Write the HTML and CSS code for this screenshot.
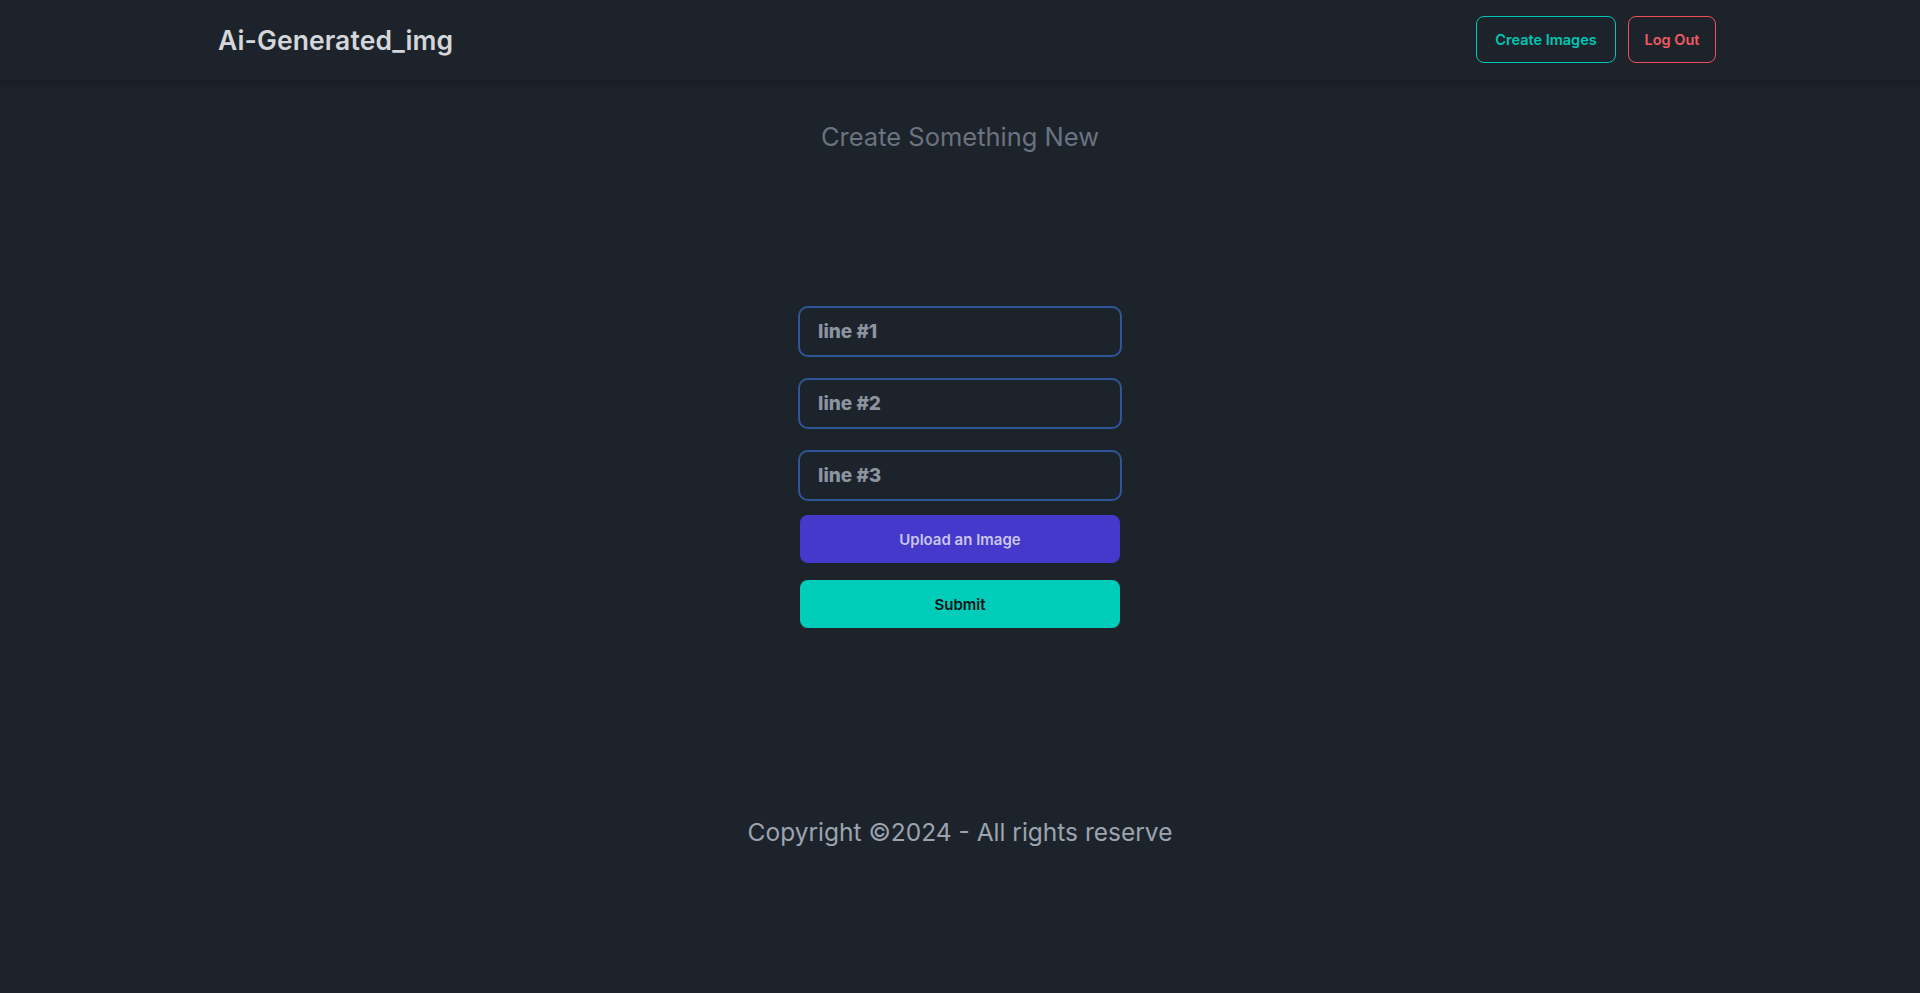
FILE: index.html
```html
<!DOCTYPE html>
<html lang="en">
<head>
<meta charset="utf-8">
<title>Ai-Generated_img</title>
<link rel="stylesheet" href="styles.css">
</head>
<body>
<header class="navbar">
  <a class="brand" href="#">Ai-Generated_img</a>
  <nav class="nav-actions">
    <button class="btn-outline btn-create">Create Images</button>
    <button class="btn-outline btn-logout">Log Out</button>
  </nav>
</header>
<main class="main">
  <h1 class="page-title">Create Something New</h1>
  <form class="form">
    <input class="field" type="text" placeholder="line #1">
    <input class="field" type="text" placeholder="line #2">
    <input class="field" type="text" placeholder="line #3">
    <button type="button" class="btn-fill btn-upload">Upload an Image</button>
    <button type="button" class="btn-fill btn-submit">Submit</button>
  </form>
</main>
<footer class="footer">
  <p>Copyright ©2024 - All rights reserve</p>
</footer>
</body>
</html>
```

FILE: styles.css
```css
* { box-sizing: border-box; }
html, body { margin: 0; padding: 0; }
body {
  background: #1d232a;
  color: #a6adbb;
  font-family: "Inter", "Noto Sans", sans-serif;
  min-height: 993px;
}
.navbar {
  height: 80px;
  display: flex;
  align-items: center;
  justify-content: space-between;
  padding: 0 204px 0 218px;
  background: #1d232a;
  box-shadow: 0 2px 8px rgba(0, 0, 0, 0.25);
  position: relative;
}
.brand {
  color: #d4d6da;
  text-decoration: none;
  font-size: 26.5px;
  font-weight: 600;
  letter-spacing: 0.1px;
}
.nav-actions {
  display: flex;
  gap: 12px;
  align-items: center;
  margin-top: -1px;
}
.btn-outline {
  height: 47px;
  border-radius: 8px;
  background: transparent;
  font-family: inherit;
  font-size: 14.5px;
  font-weight: 600;
  cursor: pointer;
  padding: 0;
}
.btn-create {
  width: 140px;
  border: 1px solid #00c7b5;
  color: #00c7b5;
}
.btn-logout {
  width: 88px;
  border: 1px solid #f04e5a;
  color: #f25a63;
}
.main {
  display: flex;
  flex-direction: column;
  align-items: center;
}
.page-title {
  margin: 0;
  padding-top: 40px;
  font-size: 25.5px;
  font-weight: 400;
  color: #6b7280;
  line-height: 34px;
}
.form {
  margin-top: 152px;
  width: 324px;
  display: flex;
  flex-direction: column;
  align-items: center;
}
.field {
  width: 324px;
  height: 51px;
  border: 2px solid #30569a;
  border-radius: 10px;
  background: #1d232a;
  padding: 0 18px;
  font-family: inherit;
  font-size: 19px;
  font-weight: 800;
  color: #a6adbb;
  margin-bottom: 21px;
  outline: none;
}
.field:last-of-type { margin-bottom: 0; }
.field::placeholder { color: #8c93a1; }
.btn-fill {
  width: 320px;
  height: 48px;
  border: none;
  border-radius: 8px;
  font-family: inherit;
  font-size: 15px;
  font-weight: 600;
  cursor: pointer;
}
.btn-upload {
  margin-top: 14px;
  background: #4539cb;
  color: #c9c6ee;
}
.btn-submit {
  margin-top: 17px;
  background: #00cdb9;
  color: #101418;
}
.footer {
  display: flex;
  justify-content: center;
  padding-top: 187px;
}
.footer p {
  margin: 0;
  font-size: 24.5px;
  line-height: 34px;
  color: #9ca3af;
}
```
